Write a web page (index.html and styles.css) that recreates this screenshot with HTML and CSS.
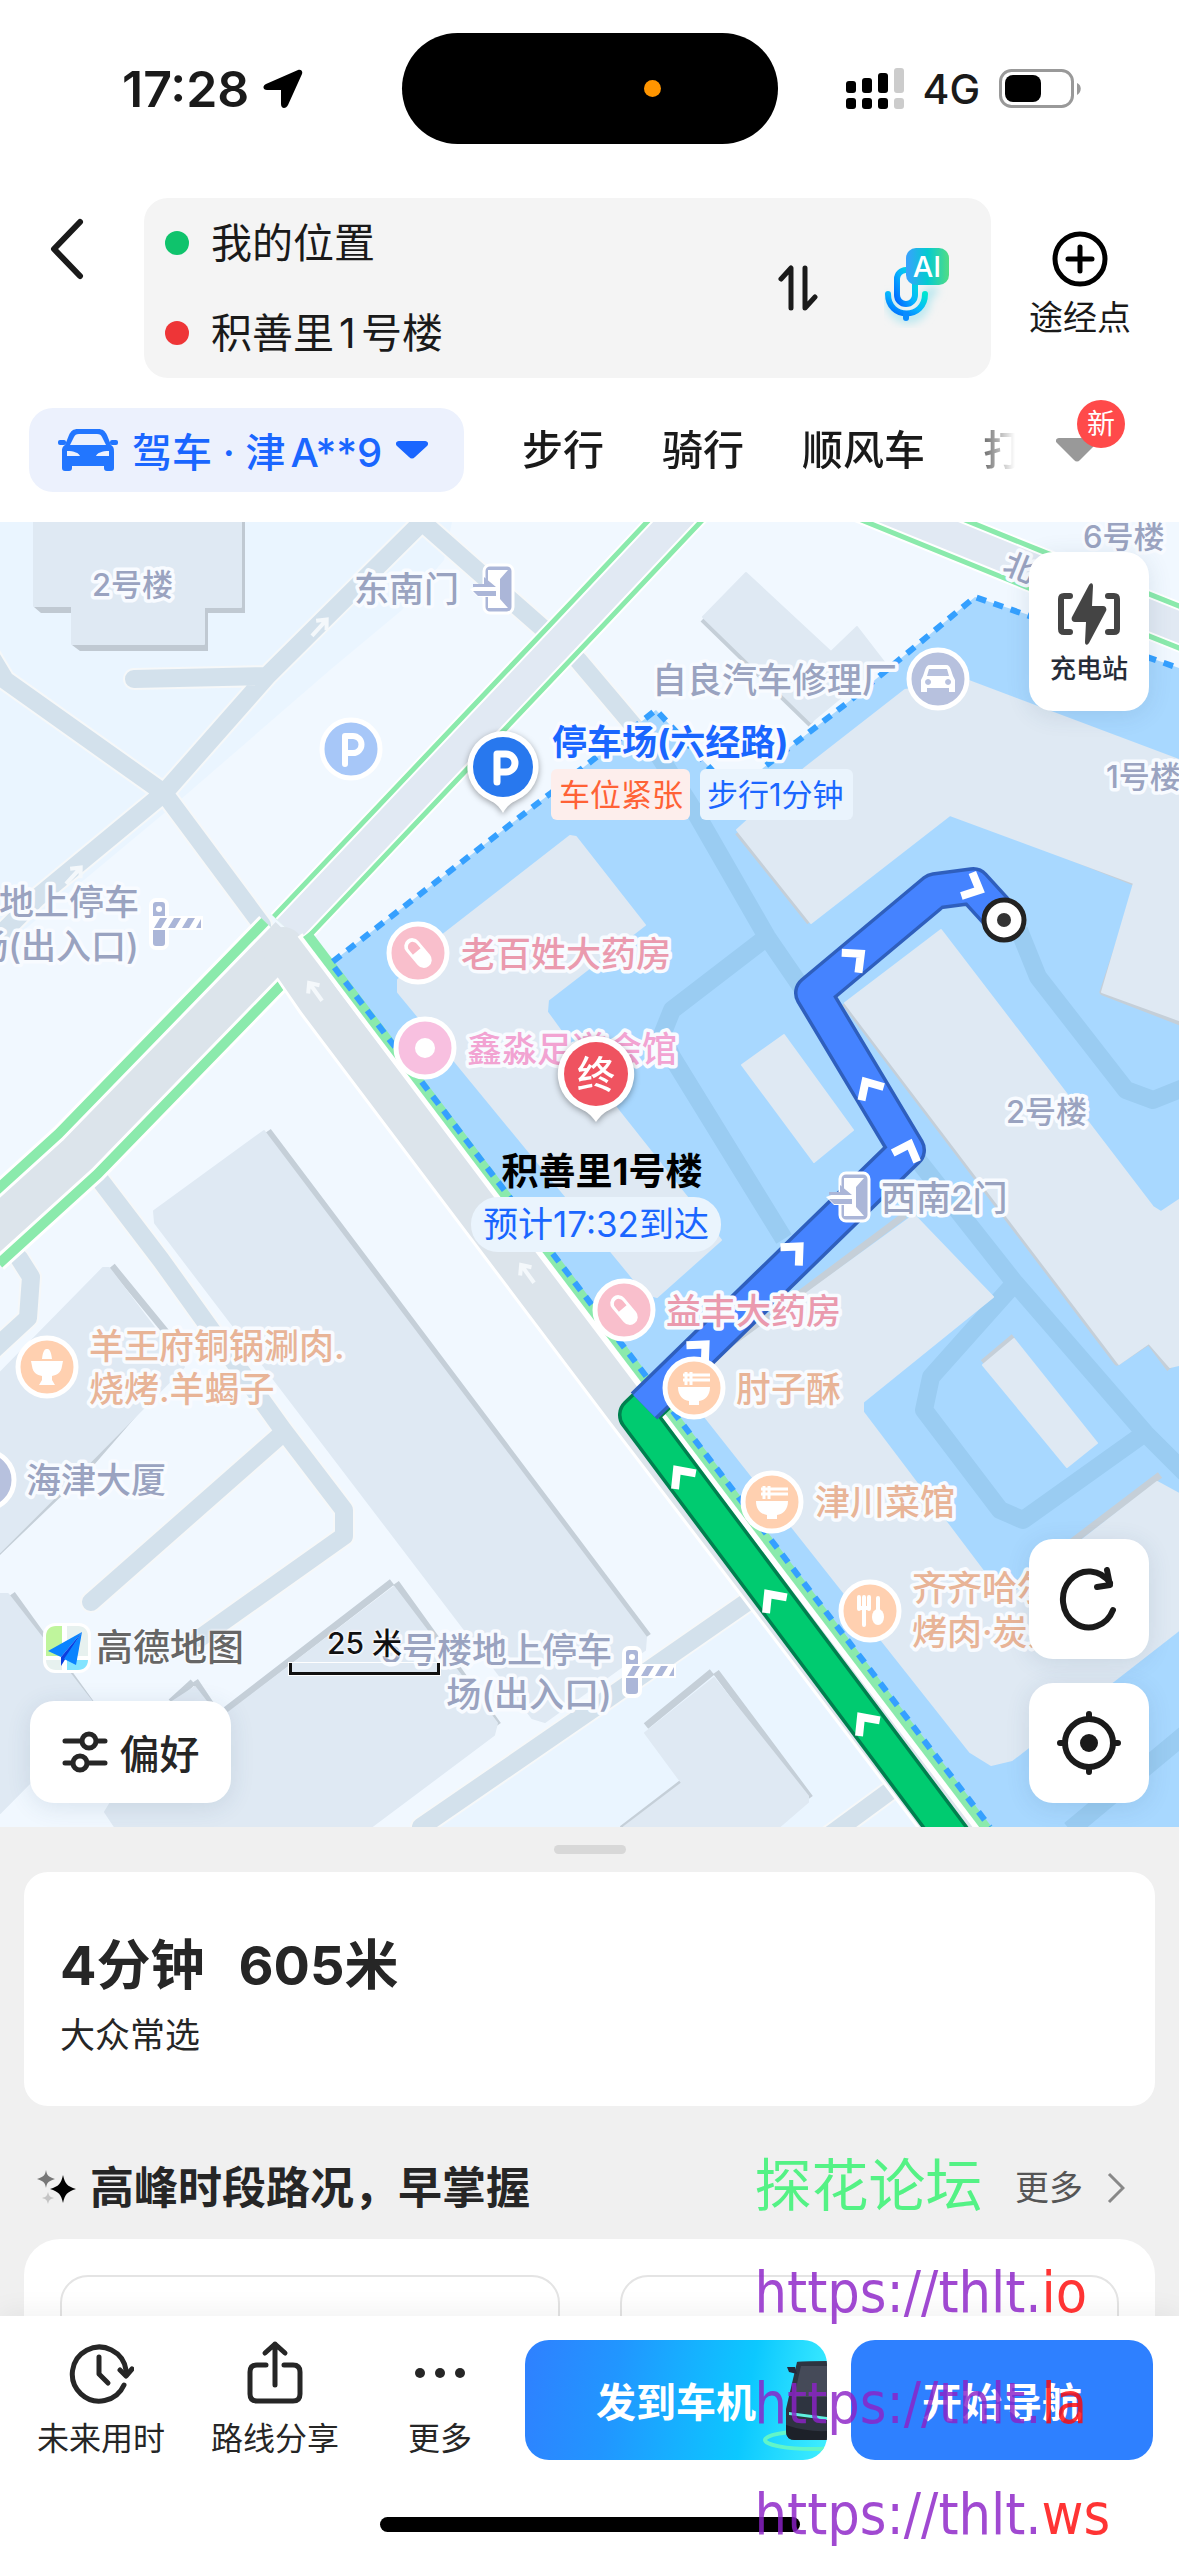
FILE: index.html
```html
<!DOCTYPE html>
<html lang="zh-CN">
<head>
<meta charset="UTF-8" />
<meta name="viewport" content="width=device-width, initial-scale=1" />
<title>路线规划</title>
<link rel="stylesheet" href="styles.css">
</head>
<body>
<div id="app">
  <header>
    <div class="status-bar">
      <div class="status-left">
        <span class="time">17:28</span>
        <svg width="40" height="40" viewBox="0 0 40 40"><path d="M35 1 3 15c-4 2-3 6 1 6h14v14c0 5 5 5 7 1L39 5c1-3-1-5-4-4z"/></svg>
      </div>
      <div class="island"><span class="mic-dot"></span></div>
      <div class="status-right">
        <svg width="58" height="42" viewBox="0 0 58 42">
          <rect x="0" y="13" width="10" height="12" rx="3"/><rect x="16" y="10" width="10" height="15" rx="3"/><rect x="32" y="5" width="10" height="20" rx="3"/>
          <rect x="48" y="0" width="10" height="25" rx="3" fill="#ccc"/>
          <rect x="0" y="30" width="10" height="11" rx="3"/><rect x="16" y="30" width="10" height="11" rx="3"/><rect x="32" y="30" width="10" height="11" rx="3"/><rect x="48" y="30" width="10" height="11" rx="3" fill="#ccc"/>
        </svg>
        <span class="network">4G</span>
        <svg width="82" height="40" viewBox="0 0 82 40">
          <rect x="1.500" y="1.500" width="72" height="36" rx="11" fill="none" stroke="#999" stroke-width="3"/>
          <rect x="6" y="6" width="36" height="27" rx="8"/>
          <path d="M78 14c5 2 5 9 0 12z" fill="#999"/>
        </svg>
      </div>
    </div>

    <div class="route-row">
      <button class="back" aria-label="返回">
        <svg width="34" height="62" viewBox="0 0 34 62"><path d="M30 4 4 31l26 27" fill="none" stroke="#1a1a1a" stroke-width="6" stroke-linecap="round" stroke-linejoin="round"/></svg>
      </button>
      <div class="route-box">
        <div class="fields">
          <label><span class="dot start"></span><input type="text" value="我的位置" aria-label="起点" /></label>
          <label><span class="dot end"></span><input type="text" value="积善里1号楼" aria-label="终点" /></label>
        </div>
        <button class="swap" aria-label="交换起终点">
          <svg width="40" height="48" viewBox="0 0 40 48"><path d="M3 15 13 4v40M27 4v40l10-11" fill="none" stroke="#1a1a1a" stroke-width="5" stroke-linecap="round" stroke-linejoin="round"/></svg>
        </button>
        <button class="voice" aria-label="语音助手">
          <svg width="66" height="80" viewBox="0 0 66 80">
            <defs>
              <linearGradient id="mic" x1="0" y1="1" x2="1" y2="0"><stop offset="0" stop-color="#0068ff"/><stop offset=".5" stop-color="#06b4ff"/><stop offset="1" stop-color="#00e5d0"/></linearGradient>
              <linearGradient id="ai" x1="0" y1="0" x2="1" y2="0"><stop offset="0" stop-color="#3aa0ff"/><stop offset=".5" stop-color="#04cbd0"/><stop offset="1" stop-color="#52dc84"/></linearGradient>
              <filter id="glow" x="-30%" y="-30%" width="160%" height="170%"><feGaussianBlur stdDeviation="5"/></filter>
            </defs>
            <path d="M6 48c0 30 36 30 36 0l10-8" fill="none" stroke="#a9e4ee" stroke-width="8" filter="url(#glow)"/>
            <rect x="13" y="22" width="18" height="34" rx="9" fill="none" stroke="url(#mic)" stroke-width="6"/>
            <path d="M4 46c0 26 37 26 37 0" fill="none" stroke="url(#mic)" stroke-width="6" stroke-linecap="round"/>
            <path d="M22 66v4" stroke="#0a8cff" stroke-width="6" stroke-linecap="round"/>
            <rect x="22" y="0" width="43" height="37" rx="10" fill="url(#ai)"/>
            <text x="43" y="29" class="ai-text">AI</text>
          </svg>
        </button>
      </div>
      <button class="via">
        <svg width="56" height="56" viewBox="0 0 56 56"><circle cx="28" cy="28" r="25" fill="none" stroke="#000" stroke-width="5"/><path d="M28 16v24M16 28h24" stroke="#000" stroke-width="5" stroke-linecap="round"/></svg>
        途经点
      </button>
    </div>

    <nav class="modes">
      <button class="mode-active">
        <svg width="60" height="42" viewBox="0 0 60 42">
          <path fill="#2276ff" fill-rule="evenodd" d="M20 0h20c5 0 7 2 9 6l4 10c3 2 3 4 3 7v16c0 2-1 3-3 3h-4c-2 0-3-1-3-3v-2H14v2c0 2-1 3-3 3H7c-2 0-3-1-3-3V23c0-3 0-5 3-7l4-10c2-4 4-6 9-6zM21 5c-3 0-4 1-5 3l-4 8h36l-4-8c-1-2-2-3-5-3zM9 22v5h13c-1-3-6-5-13-5zM51 22v5H38c1-3 6-5 13-5z"/>
          <rect x="0" y="11" width="8" height="5" rx="2" fill="#2276ff"/><rect x="52" y="11" width="8" height="5" rx="2" fill="#2276ff"/>
        </svg>
        <span>驾车 · 津A**9</span>
        <svg width="32" height="18" viewBox="0 0 32 18"><path d="M3 0h26c3 0 4 3 2 5L19 16c-2 2-4 2-6 0L1 5c-2-2-1-5 2-5z" fill="#1a66ff"/></svg>
      </button>
      <div class="mode-list">
        <button>步行</button>
        <button>骑行</button>
        <button>顺风车</button>
        <button>打车</button>
      </div>
      <button class="more-modes" aria-label="更多出行方式">
        <svg width="42" height="24" viewBox="0 0 42 24"><path d="M3 0h36c3 0 4 3 2 5L24 22c-2 2-4 2-6 0L1 5c-2-2-1-5 2-5z" fill="#999"/></svg>
        <span class="badge">新</span>
      </button>
    </nav>
  </header>

  <main class="map">
    <svg class="map-canvas" viewBox="0 522 1179 1305" preserveAspectRatio="xMidYMid slice">
      <defs>
        <path id="chevron" d="M-13 9 0-5l13 14" fill="none" stroke="#fff" stroke-width="8"/>
        <path id="lane" d="M0 12V-8M-7-2 0-10 7-2" fill="none" stroke="#f4f8fb" stroke-width="4"/>
        <g id="pill"><rect x="-8" y="-17" width="16" height="34" rx="8" fill="#fff" transform="rotate(-40)"/><path d="M-5-2v-6a5 5 0 0 1 10 0v6z" fill="#f9b9c6" transform="rotate(-40)"/></g>
        <g id="noodle"><path d="M-16-1h32c0 9-5 13-11 14v4H-5v-4c-6-1-11-5-11-14z" fill="#fff"/><path d="M-8-3v-13M-3-3v-13M-11-13H16M-11-8H16" stroke="#fff" stroke-width="3"/></g>
        <g id="door"><rect x="14" y="1" width="29" height="48" rx="6" fill="#abb6d8" stroke="#fff" stroke-width="3"/><path d="M18 6h20L30 15v20l8 9H18V33H8L0 25l8-3h10z" fill="#fff"/><path d="M3 20h11v-7l12 10H3zM3 27h23v5H8z" fill="#abb6d8"/></g>
        <g id="gate"><rect x="0" y="0" width="16" height="48" rx="5" fill="#abb6d8" stroke="#fff" stroke-width="4"/><circle cx="8" cy="9" r="3" fill="#fff"/><rect x="0" y="16" width="52" height="14" fill="#fff"/><path d="M3 28 9 18h7l-6 10zM17 28l6-10h7l-6 10zM31 28l6-10h7l-6 10zM45 28l5-9v9z" fill="#abb6d8"/></g>
      </defs>

      <rect y="522" width="1179" height="1305" fill="#f1f8ff"/>
      <path d="M0 522h452l-8 38-42 50-72 60L180 800 0 950zM430 1827l170-127 130-95 30 0 160 222z" fill="#eaf5ff"/>

      <!-- side streets -->
      <g class="street-case">
        <path d="M422 522 268 675 164 793 38 897-10 945M134 679l130-3M-10 655 5 680 164 793 262 925M422 522 547 632M578 660l76 90"/>
        <path d="M100 1180l61 80 122 170 61 80v26L200 1638M283 1433 91 1602M19 1258l12 19-3 41-38 35M421 1827l179-123 150-104M830 1835l60-44"/>
      </g>
      <g class="street">
        <path d="M422 522 268 675 164 793 38 897-10 945M134 679l130-3M-10 655 5 680 164 793 262 925M422 522 547 632M578 660l76 90"/>
        <path d="M100 1180l61 80 122 170 61 80v26L200 1638M283 1433 91 1602M19 1258l12 19-3 41-38 35M421 1827l179-123 150-104M830 1835l60-44"/>
      </g>

      <!-- buildings outside the compound -->
      <path class="shadow-fill" d="M34 522h211v91h-37v38H80l-8-6v-32H41l-7-6z"/>
      <g class="shadow">
        <path d="M268 1131 648 1636M112 1266l54 66M170 1372l-78 90-96 92M12 1594l88 122M396 1583l102 142M392 1582 226 1710M195 1681l18 27M193 1682l-22 20M712 1672l-66 54M716 1672l94 126M682 1783l-60 46M703 619l108 105"/>
      </g>
      <g class="building">
        <path d="M34 522h207v85h-37v37H72v-38H34z"/>
        <path d="M746 573l85 79 26-25 27 35-34 28-39 32L703 617z"/>
        <path d="M264 1131 646 1637l-1 13-100 72-13-4L155 1223l-1-12z"/>
        <path d="M109 1268l75 99-92 93-92 92v-179l103-105z"/>
        <path d="M0 1594h8l92 118L0 1813z"/>
        <path d="M394 1587l103 136-3 12-123 92H115l-10-15 67-110 23-15 20 26 13 0z"/>
        <path d="M714 1678l94 118v6l-29 25H624l58-44-37-50z"/>
      </g>

      <!-- main roads -->
      <g class="road road-wide">
        <path class="edge" d="M285 941 78 1154-20 1243"/><path class="green" d="M285 941 78 1154-20 1243"/><path class="inner" d="M285 941 78 1154-20 1243"/>
      </g>
      <g class="road">
        <path class="edge" d="M702 492 590 611 288 930M800 474l229 93 170 68"/><path class="green" d="M702 492 590 611 288 930M800 474l229 93 170 68"/><path class="inner" d="M702 492 590 611 288 930M800 474l229 93 170 68"/><path class="top" d="M702 492 590 611 288 930M800 474l229 93 170 68"/>
      </g>
      <path d="M290 957l29 43 307 407 330 433" fill="none" stroke="#fff" stroke-width="48"/>
      <path d="M290 936 78 1154-20 1243" fill="none" stroke="#dce4eb" stroke-width="40"/>
      <path d="M283 948l36 52 307 407 330 433" fill="none" stroke="#dce4eb" stroke-width="42" stroke-linecap="round"/>

      <!-- compound -->
      <path d="M331 963l220-170 105-83 54 58 27 32 26-32 84-65 128-106 54 18 170 60V1827H990z" fill="#a8d8ff"/>
      <g class="inner-street">
        <path d="M654 748l44 69 69 120 48 70M767 937l-95 73-10 25 10 22 112 182"/>
        <path d="M1019 930l19 47 88 113 27 10 30-12M910 1150l105 133 130 150 40 40M1014 1284l-83 93-7 33 76 100 23 10 122-87M1190 1730l-120 100"/>
      </g>
      <g class="shadow">
        <path d="M947 812l12 0 180 72-36 108 80 31M738 832l72 90M845 1003l272 359 32-21 21 28M905 1215 714 1358M1160 1475l-150 114M983 1363l31-26"/>
      </g>
      <g class="building">
        <path d="M576 837l69 88-97 75-1 12 71 98 103 130-64 57-11-3L398 992v-12l46-46 126-98z"/>
        <path d="M784 1035l69 95-39 32-72-97z"/>
        <path d="M966 680l213 80v260l-77-28 32-109-184-68-139 108-74-93 68-62 100-78z"/>
        <path d="M941 930l212 277 8 5 18-12v165l-9 2-21-24-30 21-274-361z"/>
        <path d="M914 1215l79 82-130 105v10l142 188 72-56 80-62 22 12v136l-167 130-21 5-21-13-268-339 12-52z"/>
        <path d="M1014 1339l83 104-30 24-84-102z"/>
      </g>
      <path d="M300 935l683 899" fill="none" stroke="#fff" stroke-width="6"/>
      <path d="M307 934l683 899" fill="none" stroke="#8beaac" stroke-width="10"/>
      <path class="boundary" d="M1190 672l-215-75-128 106-84 65-26 32-27-32-54-58-105 83-220 170 659 864"/>

      <use href="#lane" transform="translate(320 627) rotate(42)"/>
      <use href="#lane" transform="translate(74 875) rotate(42)"/>
      <use href="#lane" transform="translate(315 991) rotate(-36)"/>
      <use href="#lane" transform="translate(527 1273) rotate(-36)"/>

      <!-- route -->
      <g fill="none" stroke-linejoin="round">
        <path d="M662 1391 637 1415 956 1842" stroke="#00804f" stroke-width="38"/>
        <path d="M662 1391 637 1415 956 1842" stroke="#00cb70" stroke-width="31"/>
        <path d="M1004 920l-31-34-38 5-122 102 94 157-263 256" stroke="#2f5fbd" stroke-width="38"/>
        <path d="M1004 920l-31-34-38 5-122 102 94 157-263 256" stroke="#4583ff" stroke-width="31"/>
      </g>
      <use href="#chevron" transform="translate(975 888) rotate(115)"/>
      <use href="#chevron" transform="translate(857 957) rotate(50)"/>
      <use href="#chevron" transform="translate(868 1086) rotate(-31)"/>
      <use href="#chevron" transform="translate(908 1149) rotate(20)"/>
      <use href="#chevron" transform="translate(796 1250) rotate(45)"/>
      <use href="#chevron" transform="translate(702 1348) rotate(45)"/>
      <use href="#chevron" transform="translate(680 1474) rotate(-37)"/>
      <use href="#chevron" transform="translate(771 1598) rotate(-37)"/>
      <use href="#chevron" transform="translate(864 1721) rotate(-37)"/>
      <circle cx="1004" cy="920" r="20" fill="#fff" stroke="#222" stroke-width="5"/>
      <circle cx="1004" cy="920" r="7" fill="#333"/>

      <!-- poi marks -->
      <g stroke="#fff" stroke-width="5">
        <circle cx="351" cy="749" r="29" fill="#a7c7f8"/>
        <circle cx="938" cy="679" r="29" fill="#b7c1de"/>
        <circle cx="418" cy="953" r="29" fill="#f9bfcc"/>
        <circle cx="425" cy="1048" r="29" fill="#f8c0e0"/>
        <circle cx="624" cy="1310" r="29" fill="#f9bfcc"/>
        <circle cx="694" cy="1388" r="29" fill="#ffd0b0"/>
        <circle cx="772" cy="1502" r="29" fill="#ffd0b0"/>
        <circle cx="870" cy="1611" r="29" fill="#ffd0b0"/>
        <circle cx="47" cy="1367" r="29" fill="#ffd0b0"/>
        <circle cx="-15" cy="1480" r="29" fill="#b7c1de"/>
      </g>
      <circle cx="425" cy="1048" r="10" fill="#fff"/>
      <path d="M345 764v-28h8a8 8 0 0 1 0 17h-8" fill="none" stroke="#fff" stroke-width="6" stroke-linecap="round" stroke-linejoin="round"/>
      <use href="#pill" x="418" y="953"/><use href="#pill" x="624" y="1310"/>
      <use href="#noodle" x="694" y="1388"/><use href="#noodle" x="772" y="1502"/>
      <path d="M31 1361h32l-1 5c-1 7-5 9-10 10v4l3 5H39l3-5v-4c-5-1-9-3-10-10zM42 1359c1-9 3-10 5-10s4 1 5 10z" fill="#fff"/>
      <path d="M859 1597v12M864 1597v28M869 1597v12M859 1608h10" stroke="#fff" stroke-width="4" stroke-linecap="round"/>
      <path d="M878 1598v14" stroke="#fff" stroke-width="4" stroke-linecap="round"/><ellipse cx="878" cy="1617" rx="6" ry="8" fill="#fff"/>
      <path fill="#fff" fill-rule="evenodd" d="M930 665h16c3 0 4 2 5 5l2 6 2 4v12h-6v-4h-22v4h-6v-12l2-4 2-6c1-3 2-5 5-5zM927 676h22l-2-7h-18zM928 679a3 3 0 1 0 .1 0zM948 679a3 3 0 1 0 .1 0z"/>
      <use href="#door" x="470" y="564"/><use href="#door" x="826" y="1172"/>
      <use href="#gate" x="151" y="900"/><use href="#gate" x="624" y="1648"/>

      <g class="label grey">
        <text x="354" y="602">东南门</text>
        <text x="652" y="693">自良汽车修理厂</text>
        <text x="139" y="915" class="end-anchor">地上停车</text>
        <text x="139" y="959" class="end-anchor">场(出入口)</text>
        <text x="881" y="1211">西南2门</text>
        <text x="26" y="1493">海津大厦</text>
        <text x="612" y="1663" class="end-anchor">5号楼地上停车</text>
        <text x="612" y="1707" class="end-anchor">场(出入口)</text>
      </g>
      <g class="label grey small">
        <text x="92" y="596">2号楼</text>
        <text x="1083" y="548">6号楼</text>
        <text x="1106" y="788">1号楼</text>
        <text x="1006" y="1123">2号楼</text>
        <text transform="translate(1001 572) rotate(22)">北</text>
      </g>
      <g class="label pink">
        <text x="461" y="967">老百姓大药房</text>
        <text x="666" y="1324">益丰大药房</text>
        <text x="467" y="1062" class="rose">鑫淼足道会馆</text>
      </g>
      <g class="label orange">
        <text x="736" y="1402">肘子酥</text>
        <text x="815" y="1515">津川菜馆</text>
        <text x="912" y="1601">齐齐哈尔</text>
        <text x="912" y="1645">烤肉·炭火</text>
        <text x="89" y="1359">羊王府铜锅涮肉.</text>
        <text x="89" y="1402">烧烤.羊蝎子</text>
      </g>

      <!-- parking pin -->
      <g class="pin">
        <path d="M503 731a36 36 0 0 1 14 69c-6 3-10 6-14 13-4-7-8-10-14-13a36 36 0 0 1 14-69z" fill="#fff"/>
        <circle cx="503" cy="767" r="30" fill="#2878ee"/>
        <path d="M497 782v-28h9a9 9 0 0 1 0 18h-9" fill="none" stroke="#fff" stroke-width="7" stroke-linecap="round" stroke-linejoin="round"/>
      </g>
      <g class="label parking"><text x="552" y="755">停车场(六经路)</text></g>
      <rect x="551" y="769" width="139" height="51" rx="6" fill="#fdeeec"/>
      <text x="559" y="806" class="tag tight">车位紧张</text>
      <rect x="700" y="769" width="153" height="51" rx="6" fill="#eaf4fd"/>
      <text x="707" y="806" class="tag walk">步行1分钟</text>

      <!-- destination pin -->
      <g class="pin">
        <path d="M596 1036a38 38 0 0 1 15 73c-6 3-10 6-15 13-5-7-9-10-15-13a38 38 0 0 1 15-73z" fill="#fff"/>
        <circle cx="596" cy="1074" r="32" fill="#ef5360"/>
        <text x="596" y="1088" class="pin-text">终</text>
      </g>
      <text x="602" y="1185" class="dest-name">积善里1号楼</text>
      <rect x="471" y="1197" width="250" height="55" rx="27" fill="#eaf4fd"/>
      <text x="596" y="1237" class="eta">预计17:32到达</text>
    </svg>

    <button class="float charge">
      <svg width="62" height="62" viewBox="0 0 62 62"><path d="M12 13H6c-2 0-3 1-3 3v30c0 2 1 3 3 3h6M50 13h6c2 0 3 1 3 3v30c0 2-1 3-3 3h-6" fill="none" stroke="#444" stroke-width="6" stroke-linecap="round"/><path d="M31 2c2-3 4-2 4 1l-1 20h11c3 0 4 3 3 5L31 60c-2 3-4 2-4-1l1-20H17c-3 0-4-3-3-5z" fill="#444"/></svg>
      充电站
    </button>

    <div class="map-tools">
      <button class="float square" aria-label="刷新">
        <svg width="60" height="64" viewBox="0 0 60 64"><path d="M54 43A26 28 0 1 1 51 16" fill="none" stroke="#1a1a1a" stroke-width="6" stroke-linecap="round"/><path d="M48 3l3 15-13 2" fill="none" stroke="#1a1a1a" stroke-width="6" stroke-linecap="round" stroke-linejoin="round"/></svg>
      </button>
      <button class="float square" aria-label="定位">
        <svg width="66" height="66" viewBox="0 0 66 66"><circle cx="33" cy="33" r="24" fill="none" stroke="#1a1a1a" stroke-width="6"/><circle cx="33" cy="33" r="9" fill="#1a1a1a"/><path d="M33 4v5M33 57v5M4 33h5M57 33h5" stroke="#1a1a1a" stroke-width="6" stroke-linecap="round"/></svg>
      </button>
    </div>

    <div class="map-foot">
      <div class="brand-row">
        <div class="brand">
          <svg width="48" height="50" viewBox="0 0 48 50">
            <rect width="48" height="50" rx="12" fill="#fff"/>
            <path d="M13 3h6v30H3V13C3 7 7 3 13 3z" fill="#bff59c"/><path d="M24 3h11c6 0 10 4 10 10v20H24zM3 37h16v10h-6c-6 0-10-4-10-10z" fill="#e7f1ef"/><path d="M24 37h21c0 6-4 10-10 10H24z" fill="#83e4ff"/>
            <path d="M39 9 5 28l13 6z" fill="#0a84ff"/><path d="M39 9 18 34v9z" fill="#0b3fe0"/><path d="M39 9 21 36l12 6z" fill="#0a84ff"/>
          </svg>
          <span>高德地图</span>
        </div>
        <div class="scale">
          <span>25 米</span>
          <div class="scale-bar"></div>
        </div>
      </div>
      <button class="float prefer">
        <svg width="46" height="42" viewBox="0 0 46 42" fill="none" stroke="#262626" stroke-width="5" stroke-linecap="round"><path d="M3 10h15M36 10h7M3 32h7M27 32h16"/><circle cx="27" cy="10" r="7"/><circle cx="18" cy="32" r="7"/></svg>
        偏好
      </button>
    </div>
  </main>

  <section class="panel">
    <div class="handle"></div>
    <div class="card summary">
      <h1><span>4分钟</span><span>605米</span></h1>
      <p>大众常选</p>
    </div>
    <div class="section-head">
      <svg width="40" height="36" viewBox="0 0 40 36"><path d="M26 5c2 9 4 11 13 14-9 3-11 5-13 14-2-9-4-11-13-14 9-3 11-5 13-14z"/><path d="M9 0c1 6 3 7 9 9-6 2-8 3-9 9-1-6-3-7-9-9 6-2 8-3 9-9z" fill="#777"/><path d="M11 22c1 4 2 5 6 6-4 1-5 2-6 6-1-4-2-5-6-6 4-1 5-2 6-6z" fill="#c4c4c4"/></svg>
      <h2>高峰时段路况，早掌握</h2>
      <a href="#">更多 <svg width="18" height="32" viewBox="0 0 18 32"><path d="M2 2l14 14L2 30" fill="none" stroke="#888" stroke-width="3"/></svg></a>
    </div>
    <div class="peak">
      <div class="card peak-card">
        <div class="peak-item"></div>
        <div class="peak-item"></div>
      </div>
    </div>
  </section>

  <footer>
    <div class="actions">
      <button class="tool">
        <svg width="66" height="66" viewBox="0 0 66 66" fill="none" stroke="#262626" stroke-width="5" stroke-linecap="round" stroke-linejoin="round"><path d="M56 45A27 27 0 1 1 58 30"/><path d="M52 30l6 6 6-7"/><path d="M31 17v17l9 9"/></svg>
        未来用时
      </button>
      <button class="tool">
        <svg width="66" height="66" viewBox="0 0 66 66" fill="none" stroke="#262626" stroke-width="5" stroke-linecap="round" stroke-linejoin="round"><path d="M24 25h-9q-7 0-7 7v22q0 7 7 7h36q7 0 7-7V32q0-7-7-7h-9"/><path d="M33 45V4M23 13 33 4l10 9"/></svg>
        路线分享
      </button>
      <button class="tool">
        <svg width="66" height="66" viewBox="0 0 66 66" fill="#262626"><circle cx="13" cy="33" r="5"/><circle cx="33" cy="33" r="5"/><circle cx="53" cy="33" r="5"/></svg>
        更多
      </button>
      <button class="cta send">发到车机
        <svg class="car" width="66" height="120" viewBox="0 0 66 120">
          <ellipse cx="52" cy="100" rx="48" ry="9" fill="none" stroke="#62f5c8" stroke-width="4"/>
          <path d="M36 22q2-1 30-1v79H34q-9 0-9-9V69z" fill="#2e3440"/>
          <path d="M40 26h26v31H33z" fill="#454a58"/>
          <path d="M26 27h8l2 7-8-2zM28 71l38 7v3l-38-6z" fill="#23283a"/>
          <path d="M28 72l38 5v3l-38-5z" fill="#5ff0e0"/>
          <path d="M25 85q20 7 41 6v9H34q-9 0-9-9z" fill="#1d2129"/>
        </svg>
      </button>
      <button class="cta go">开始导航</button>
    </div>
    <div class="home-indicator"></div>
  </footer>

  <div class="watermark">
    <p class="site">探花论坛</p>
    <p>https://thlt.<b>io</b></p>
    <p>https://thlt.<b>la</b></p>
    <p>https://thlt.<b>ws</b></p>
  </div>
</div>
</body>
</html>
```
FILE: styles.css
```css
* {
  box-sizing: border-box;
}
body {
  margin: 0;
  font-family: Inter, "Noto Sans CJK SC", sans-serif;
  color: #1a1a1a;
  background: #fff;
}
#app {
  position: relative;
  display: flex;
  flex-direction: column;
  min-height: 100vh;
  overflow: hidden;
}
h1, h2, p {
  margin: 0;
}
button {
  margin: 0;
  padding: 0;
  border: none;
  background: none;
  font-family: inherit;
  color: inherit;
  cursor: pointer;
}
svg {
  display: block;
  flex: none;
}

/* status bar */
.status-bar {
  display: grid;
  grid-template-columns: 1fr 376px 1fr;
  align-items: center;
  padding-top: 33px;
}
.status-left {
  display: flex;
  align-items: center;
  gap: 14px;
  padding-left: 122px;
}
.time {
  font-size: 50px;
  font-weight: 600;
  line-height: 60px;
}
.island {
  display: flex;
  align-items: center;
  justify-content: flex-end;
  height: 111px;
  padding-right: 117px;
  border-radius: 56px;
  background: #000;
}
.mic-dot {
  width: 17px;
  height: 17px;
  border-radius: 50%;
  background: #ff9500;
}
.status-right {
  display: flex;
  align-items: center;
  gap: 19px;
  padding-left: 68px;
}
.network {
  font-size: 41px;
  font-weight: 500;
  line-height: 60px;
}

/* start and end */
.route-row {
  display: flex;
  padding: 54px 48px 0 50px;
}
.back {
  flex: none;
  width: 94px;
  align-self: flex-start;
  padding-top: 20px;
}
.route-box {
  flex: 1;
  min-width: 0;
  display: flex;
  align-items: center;
  padding-right: 41px;
  border-radius: 24px;
  background: #f4f4f4;
}
.fields {
  flex: 1;
  min-width: 0;
}
.fields label {
  display: flex;
  align-items: center;
  gap: 22px;
  height: 90px;
  padding-left: 21px;
}
.fields input {
  flex: 1;
  min-width: 0;
  padding: 0;
  border: none;
  outline: none;
  background: transparent;
  font-family: inherit;
  font-size: 41px;
  line-height: 60px;
  color: #1a1a1a;
  text-autospace: normal;
}
.dot {
  width: 24px;
  height: 24px;
  border-radius: 50%;
}
.dot.start {
  background: #0fc36c;
}
.dot.end {
  background: #ee3537;
}
.swap {
  margin-right: 66px;
}
.ai-text {
  font-size: 29px;
  font-weight: 500;
  fill: #fff;
  text-anchor: middle;
}
.via {
  flex: none;
  align-self: flex-start;
  display: flex;
  flex-direction: column;
  align-items: center;
  gap: 6px;
  margin-left: 38px;
  padding-top: 33px;
  font-size: 34px;
  line-height: 50px;
  white-space: nowrap;
}

/* travel modes */
.modes {
  display: flex;
  align-items: center;
  padding: 30px 29px;
}
.mode-active {
  display: flex;
  align-items: center;
  width: 435px;
  height: 84px;
  padding-left: 29px;
  gap: 14px;
  border-radius: 24px;
  background: #ecf1fd;
  color: #1a66ff;
  font-size: 40px;
  font-weight: 500;
  white-space: nowrap;
  text-autospace: normal;
}
.mode-list {
  flex: 1;
  display: flex;
  gap: 58px;
  margin-left: 58px;
  overflow: hidden;
  -webkit-mask-image: linear-gradient(to right, #000 90%, transparent 100%);
  mask-image: linear-gradient(to right, #000 90%, transparent 100%);
}
.mode-list button {
  flex: none;
  font-size: 41px;
  font-weight: 500;
  line-height: 60px;
}
.more-modes {
  position: relative;
  margin-left: 41px;
  margin-right: 52px;
}
.badge {
  position: absolute;
  left: 21px;
  bottom: 14px;
  width: 48px;
  height: 48px;
  border-radius: 50%;
  background: #ff4a4a;
  color: #fff;
  font-size: 28px;
  line-height: 48px;
}

/* map */
.map {
  position: relative;
  flex: 1;
  min-height: 900px;
  overflow: hidden;
  background: #f1f8ff;
}
.map-canvas {
  position: absolute;
  inset: 0;
  width: 100%;
  height: 100%;
}
.street-case {
  fill: none;
  stroke: #f6f8f9;
  stroke-width: 22px;
  stroke-linecap: round;
  stroke-linejoin: round;
}
.street {
  fill: none;
  stroke: #d3e1ec;
  stroke-width: 18px;
  stroke-linecap: round;
  stroke-linejoin: round;
}
.inner-street {
  fill: none;
  stroke: #9accf2;
  stroke-width: 18px;
  stroke-linejoin: round;
}
.building {
  fill: #dfe9f3;
  stroke: #dfe9f3;
  stroke-width: 2px;
  stroke-linejoin: round;
}
.shadow {
  fill: none;
  stroke: #c5cfd8;
  stroke-width: 7px;
  stroke-linejoin: round;
}
.shadow-fill {
  fill: #c0c9d2;
}
.road path {
  fill: none;
}
.road .edge {
  stroke: #fff;
  stroke-width: 48px;
}
.road .green {
  stroke: #8beaac;
  stroke-width: 44px;
}
.road .inner {
  stroke: #fff;
  stroke-width: 34px;
}
.road .top {
  stroke: #e1e9f3;
  stroke-width: 30px;
}
.road-wide .edge {
  stroke-width: 72px;
}
.road-wide .green {
  stroke-width: 66px;
}
.road-wide .inner {
  stroke-width: 46px;
}
.boundary {
  fill: none;
  stroke: #35a0ff;
  stroke-width: 6px;
  stroke-dasharray: 10 8;
}
.label {
  font-size: 35px;
  font-weight: 500;
  paint-order: stroke;
  stroke: #f8fbff;
  stroke-width: 7px;
  stroke-linejoin: round;
}
.label.small {
  font-size: 31px;
}
.label.grey {
  fill: #9aa3c0;
}
.label.pink {
  fill: #ea9aae;
}
.label .rose {
  fill: #f2a3d2;
}
.label.orange {
  fill: #e8b497;
}
.label.parking {
  font-weight: 700;
  fill: #1a66ff;
}
.end-anchor {
  text-anchor: end;
}
.tag {
  font-size: 31px;
}
.tight {
  fill: #ff6236;
}
.walk {
  fill: #1a66ff;
}
.pin {
  filter: drop-shadow(0 2px 3px rgba(0, 0, 0, 0.35));
}
.pin-text {
  font-size: 38px;
  font-weight: 500;
  fill: #fff;
  text-anchor: middle;
}
.dest-name {
  font-size: 37px;
  font-weight: 700;
  fill: #000;
  text-anchor: middle;
}
.eta {
  font-size: 35px;
  fill: #1a66ff;
  text-anchor: middle;
}

.float {
  display: flex;
  align-items: center;
  justify-content: center;
  border-radius: 24px;
  background: #fff;
  box-shadow: 0 4px 24px rgba(40, 70, 110, 0.12);
}
.charge {
  position: absolute;
  top: 30px;
  right: 30px;
  flex-direction: column;
  gap: 6px;
  width: 120px;
  height: 159px;
  padding-top: 6px;
  color: #262c38;
  font-size: 26px;
  font-weight: 500;
  line-height: 36px;
}
.map-tools {
  position: absolute;
  right: 30px;
  bottom: 24px;
  display: flex;
  flex-direction: column;
  gap: 24px;
}
.square {
  width: 120px;
  height: 120px;
}
.map-foot {
  position: absolute;
  left: 30px;
  bottom: 24px;
}
.brand-row {
  display: flex;
  align-items: flex-end;
  margin-bottom: 26px;
}
.brand {
  display: flex;
  align-items: center;
  gap: 5px;
  width: 259px;
  padding-left: 13px;
  font-size: 37px;
  font-weight: 500;
  line-height: 54px;
  color: #666;
  text-shadow: 0 0 3px #fff, 0 0 3px #fff;
}
.scale {
  width: 151px;
  font-size: 30px;
  font-weight: 500;
  line-height: 40px;
  text-align: center;
  color: #111;
  text-shadow: 0 0 3px #fff, 0 0 3px #fff, 0 0 3px #fff;
}
.scale-bar {
  height: 12px;
  border: 3px solid #111;
  border-top: none;
  box-shadow: 0 0 0 1px #fff;
}
.prefer {
  gap: 12px;
  width: 201px;
  height: 102px;
  color: #262626;
  font-size: 40px;
  font-weight: 500;
}

/* bottom panel */
.panel {
  background: #f0f0f0;
}
.handle {
  width: 72px;
  height: 9px;
  margin: 0 auto;
  position: relative;
  top: 18px;
  border-radius: 5px;
  background: #d8d8d8;
}
.card {
  margin: 36px 24px 0;
  border-radius: 24px;
  background: #fff;
}
.summary {
  padding: 56px 36px 46px;
  color: #262626;
}
.summary h1 {
  display: flex;
  gap: 34px;
  font-size: 54px;
  font-weight: 700;
  line-height: 76px;
}
.summary p {
  margin-top: 6px;
  font-size: 35px;
  line-height: 50px;
}
.section-head {
  display: flex;
  align-items: center;
  height: 133px;
  padding: 30px 54px 0 37px;
}
.section-head h2 {
  flex: 1;
  margin-left: 13px;
  font-size: 44px;
  font-weight: 700;
  line-height: 64px;
  color: #262626;
}
.section-head a {
  display: flex;
  align-items: center;
  gap: 24px;
  font-size: 34px;
  line-height: 50px;
  color: #555;
  text-decoration: none;
}
.peak {
  height: 77px;
  overflow: hidden;
}
.peak-card {
  display: flex;
  gap: 60px;
  margin-top: 0;
  padding: 36px;
  border-radius: 36px;
}
.peak-item {
  flex: 1;
  height: 200px;
  border: 2px solid #e4e4e4;
  border-radius: 28px;
}

/* bottom bar */
footer {
  position: relative;
  padding: 24px 0;
  background: #fff;
  box-shadow: 0 -6px 24px rgba(0, 0, 0, 0.05);
}
.actions {
  display: flex;
  gap: 24px;
  height: 120px;
  padding: 0 26px 0 14px;
}
.tool {
  display: flex;
  flex-direction: column;
  align-items: center;
  gap: 8px;
  min-width: 156px;
  margin-right: -24px;
  padding: 0 23px;
  font-size: 32px;
  line-height: 50px;
  color: #262626;
  white-space: nowrap;
}
.cta {
  flex: 1;
  border-radius: 24px;
  color: #fff;
  font-size: 40px;
  font-weight: 700;
  overflow: hidden;
}
.send {
  position: relative;
  margin-left: 7px;
  background: linear-gradient(100deg, #2f80ff 0%, #2196ff 30%, #0cc8ff 72%, #40efff 100%);
}
.car {
  position: absolute;
  right: 0;
  top: 0;
}
.go {
  background: #2e80ff;
}
.home-indicator {
  width: 420px;
  height: 15px;
  margin: 57px auto 0;
  border-radius: 8px;
  background: #000;
}

/* watermark */
.watermark {
  position: absolute;
  left: 64%;
  bottom: -14px;
  font-family: "DejaVu Sans Condensed", "DejaVu Sans", sans-serif;
  font-size: 57px;
  line-height: 111px;
  white-space: nowrap;
  color: #8c22c8;
  opacity: 0.82;
  pointer-events: none;
}
.watermark .site {
  font-family: "Noto Sans CJK SC", sans-serif;
  color: #33f36e;
}
.watermark b {
  font-weight: 400;
  color: #ff0808;
}
```
